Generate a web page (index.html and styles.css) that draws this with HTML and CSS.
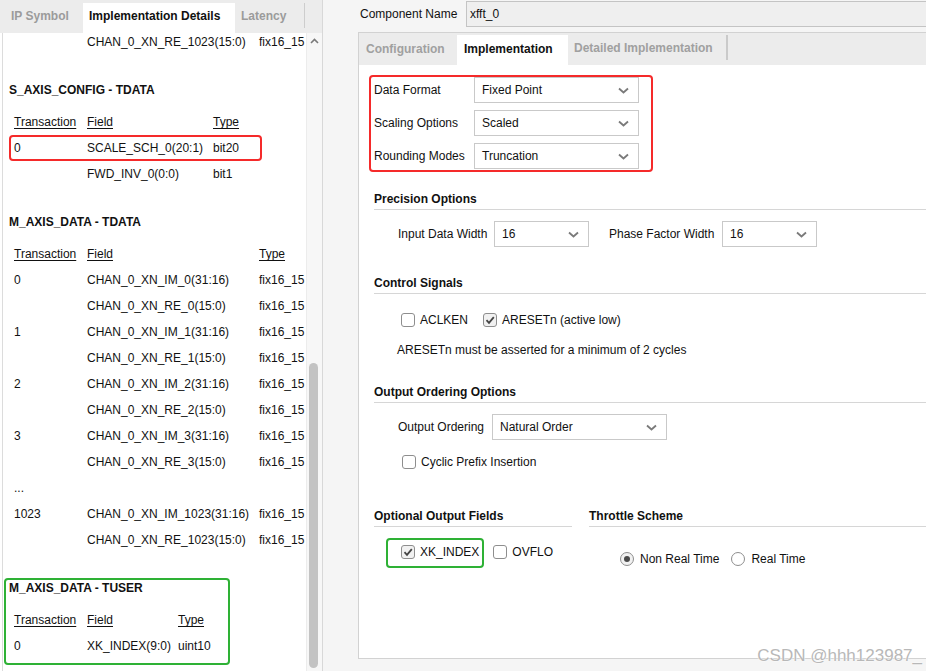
FILE: index.html
```html
<!DOCTYPE html>
<html>
<head>
<meta charset="utf-8">
<link rel="stylesheet" href="styles.css">
</head>
<body>
<div class="app">
  <div class="left">
    <div class="ltabs">
      <div class="ltab lt1">IP Symbol</div>
      <div class="ltab lt2 active">Implementation Details</div>
      <div class="ltab lt3">Latency</div>
    </div>
    <div class="lbody">
      <div class="lcontent">
        <div class="scrolled">
          <div class="grid g-data">
            <span></span><span>CHAN_0_XN_RE_1023(15:0)</span><span>fix16_15</span>
          </div>

          <section class="sec">
            <div class="sec-title">S_AXIS_CONFIG - TDATA</div>
            <div class="grid g-config">
              <span class="hd">Transaction</span><span class="hd">Field</span><span class="hd">Type</span>
              <span>0</span><span>SCALE_SCH_0(20:1)</span><span>bit20</span>
              <span></span><span>FWD_INV_0(0:0)</span><span>bit1</span>
            </div>
            <div class="annot red-left"></div>
          </section>

          <section class="sec">
            <div class="sec-title">M_AXIS_DATA - TDATA</div>
            <div class="grid g-data">
              <span class="hd">Transaction</span><span class="hd">Field</span><span class="hd">Type</span>
              <span>0</span><span>CHAN_0_XN_IM_0(31:16)</span><span>fix16_15</span>
              <span></span><span>CHAN_0_XN_RE_0(15:0)</span><span>fix16_15</span>
              <span>1</span><span>CHAN_0_XN_IM_1(31:16)</span><span>fix16_15</span>
              <span></span><span>CHAN_0_XN_RE_1(15:0)</span><span>fix16_15</span>
              <span>2</span><span>CHAN_0_XN_IM_2(31:16)</span><span>fix16_15</span>
              <span></span><span>CHAN_0_XN_RE_2(15:0)</span><span>fix16_15</span>
              <span>3</span><span>CHAN_0_XN_IM_3(31:16)</span><span>fix16_15</span>
              <span></span><span>CHAN_0_XN_RE_3(15:0)</span><span>fix16_15</span>
              <span>...</span><span></span><span></span>
              <span>1023</span><span>CHAN_0_XN_IM_1023(31:16)</span><span>fix16_15</span>
              <span></span><span>CHAN_0_XN_RE_1023(15:0)</span><span>fix16_15</span>
            </div>
          </section>

          <section class="sec">
            <div class="sec-title">M_AXIS_DATA - TUSER</div>
            <div class="grid g-user">
              <span class="hd">Transaction</span><span class="hd">Field</span><span class="hd">Type</span>
              <span>0</span><span>XK_INDEX(9:0)</span><span>uint10</span>
            </div>
            <div class="annot green-left"></div>
          </section>
        </div>
      </div>
      <div class="scrollbar">
        <svg class="uparrow" width="9" height="6" viewBox="0 0 9 6"><path d="M1 5 L4.5 1.5 L8 5" fill="none" stroke="#7a7a7a" stroke-width="1.6"/></svg>
        <div class="thumb"></div>
      </div>
    </div>
  </div>

  <div class="right">
    <div class="comp-row">
      <span class="comp-label">Component Name</span>
      <div class="comp-input">xfft_0</div>
    </div>
    <div class="tabpanel">
      <div class="rtabs">
        <div class="rtab rt1">Configuration</div>
        <div class="rtab rt2 active">Implementation</div>
        <div class="rtab rt3">Detailed Implementation</div>
      </div>
      <div class="rcontent">
        <div class="fmt-group">
          <div class="frow">
            <span class="flabel">Data Format</span>
            <div class="select s-fmt"><span>Fixed Point</span><svg width="11" height="7" viewBox="0 0 11 7"><path d="M1 1.5 L5.5 5.5 L10 1.5" fill="none" stroke="#7a7a7a" stroke-width="1.8"/></svg></div>
          </div>
          <div class="frow">
            <span class="flabel">Scaling Options</span>
            <div class="select s-fmt"><span>Scaled</span><svg width="11" height="7" viewBox="0 0 11 7"><path d="M1 1.5 L5.5 5.5 L10 1.5" fill="none" stroke="#7a7a7a" stroke-width="1.8"/></svg></div>
          </div>
          <div class="frow">
            <span class="flabel">Rounding Modes</span>
            <div class="select s-fmt"><span>Truncation</span><svg width="11" height="7" viewBox="0 0 11 7"><path d="M1 1.5 L5.5 5.5 L10 1.5" fill="none" stroke="#7a7a7a" stroke-width="1.8"/></svg></div>
          </div>
          <div class="annot red-right"></div>
        </div>

        <div class="gtitle t-prec">Precision Options</div>
        <div class="prow">
          <span class="plabel pl-in">Input Data Width</span>
          <div class="select s-small"><span>16</span><svg width="11" height="7" viewBox="0 0 11 7"><path d="M1 1.5 L5.5 5.5 L10 1.5" fill="none" stroke="#7a7a7a" stroke-width="1.8"/></svg></div>
          <span class="plabel pl-ph">Phase Factor Width</span>
          <div class="select s-small"><span>16</span><svg width="11" height="7" viewBox="0 0 11 7"><path d="M1 1.5 L5.5 5.5 L10 1.5" fill="none" stroke="#7a7a7a" stroke-width="1.8"/></svg></div>
        </div>

        <div class="gtitle t-ctrl">Control Signals</div>
        <div class="crow c-ctrl">
          <span class="cb"></span><span class="cl cl-aclk">ACLKEN</span>
          <span class="cb checked"><svg width="12" height="12" viewBox="0 0 12 12"><path d="M2.5 6.2 L5 8.8 L9.8 3.2" fill="none" stroke="#444" stroke-width="1.8"/></svg></span><span class="cl">ARESETn (active low)</span>
        </div>
        <div class="note">ARESETn must be asserted for a minimum of 2 cycles</div>

        <div class="gtitle t-out">Output Ordering Options</div>
        <div class="prow">
          <span class="plabel pl-oo">Output Ordering</span>
          <div class="select s-order"><span>Natural Order</span><svg width="11" height="7" viewBox="0 0 11 7"><path d="M1 1.5 L5.5 5.5 L10 1.5" fill="none" stroke="#7a7a7a" stroke-width="1.8"/></svg></div>
        </div>
        <div class="crow c-cyc">
          <span class="cb"></span><span class="cl">Cyclic Prefix Insertion</span>
        </div>

        <div class="cols">
          <div class="col-opt">
            <div class="gtitle">Optional Output Fields</div>
            <div class="crow c-opt">
              <span class="cb checked"><svg width="12" height="12" viewBox="0 0 12 12"><path d="M2.5 6.2 L5 8.8 L9.8 3.2" fill="none" stroke="#444" stroke-width="1.8"/></svg></span><span class="cl cl-xk">XK_INDEX</span>
              <span class="cb"></span><span class="cl">OVFLO</span>
              <div class="annot green-right"></div>
            </div>
          </div>
          <div class="col-thr">
            <div class="gtitle">Throttle Scheme</div>
            <div class="crow c-thr">
              <span class="radio on"></span><span class="cl cl-nrt">Non Real Time</span>
              <span class="radio"></span><span class="cl">Real Time</span>
            </div>
          </div>
        </div>
      </div>
    </div>
  </div>
  <div class="watermark">CSDN @hhh123987_</div>
</div>
</body>
</html>
```

FILE: styles.css
```css
html, body {
  margin: 0;
  padding: 0;
}
body {
  font-family: "Liberation Sans", Arial, sans-serif;
  font-size: 12px;
  color: #111;
  overflow: hidden;
}
.app {
  position: relative;
  display: flex;
  width: 926px;
  height: 671px;
  overflow: hidden;
  background: #f2f2f2;
}

/* ---------- left panel ---------- */
.left {
  width: 323px;
  height: 671px;
  flex: none;
  display: flex;
  flex-direction: column;
  background: #fff;
  border-right: 1px solid #d8d8d8;
  box-sizing: border-box;
}
.ltabs {
  height: 33px;
  flex: none;
  display: flex;
  align-items: flex-end;
  padding-left: 3px;
  background: #ececec;
}
.ltab {
  height: 30px;
  line-height: 26px;
  padding-bottom: 4px;
  box-sizing: border-box;
  font-weight: bold;
  color: #9b9b9b;
  white-space: nowrap;
}
.lt1 { width: 80px; padding-left: 8px; }
.lt2 { width: 152px; padding-left: 6px; background: #fff; color: #111; }
.lt3 {
  width: 70px;
  padding-left: 6px;
  border-right: 1px solid #cdcdcd;
  height: 25px;
  margin-bottom: 5px;
  line-height: 26px;
  padding-bottom: 0;
}
.lbody {
  flex: 1;
  min-height: 0;
  display: flex;
  margin-left: 2px;
  border-left: 1px solid #dcdcdc;
}
.lcontent {
  width: 303px;
  flex: none;
  overflow: hidden;
  background: #fff;
}
.scrolled {
  margin-top: -4px;
}
.grid {
  display: grid;
  grid-auto-rows: 26px;
  align-items: center;
  padding-left: 11px;
  white-space: nowrap;
}
.g-data { grid-template-columns: 73px 172px auto; }
.g-config { grid-template-columns: 73px 126px auto; }
.g-user { grid-template-columns: 73px 91px auto; }
.hd {
  text-decoration: underline;
  text-underline-offset: 2px;
}
.sec {
  position: relative;
  margin-top: 27px;
}
.sec-title {
  margin-left: 6px;
  line-height: 16px;
  font-weight: bold;
  margin-bottom: 11px;
}
.annot {
  position: absolute;
  box-sizing: border-box;
  border-radius: 4px;
  pointer-events: none;
}
.red-left {
  top: 53px;
  left: 6px;
  width: 253px;
  height: 26px;
  border: 2px solid #f52a2a;
}
.green-left {
  top: -2px;
  left: 1px;
  width: 226px;
  height: 87px;
  border: 2px solid #2eb135;
}
.scrollbar {
  width: 16px;
  flex: none;
  background: #f7f7f7;
  border-left: 1px solid #ececec;
  box-sizing: border-box;
  display: flex;
  flex-direction: column;
}
.uparrow {
  margin: 5px 0 0 3px;
  flex: none;
}
.thumb {
  margin: 319px 0 0 2px;
  width: 9px;
  height: 305px;
  border-radius: 5px;
  background: #c3c3c3;
  flex: none;
}

/* ---------- right panel ---------- */
.right {
  flex: 1;
  display: flex;
  flex-direction: column;
  padding-left: 35px;
  padding-top: 1px;
  background: #f5f5f5;
  min-width: 0;
}
.comp-row {
  display: flex;
  align-items: center;
  height: 26px;
}
.comp-label {
  width: 108px;
  padding-left: 2px;
  box-sizing: border-box;
  flex: none;
}
.comp-input {
  flex: 1;
  height: 26px;
  line-height: 24px;
  box-sizing: border-box;
  border: 1px solid #c4c4c4;
  border-right: none;
  background: #efefef;
  padding-left: 3px;
}
.tabpanel {
  margin-top: 5px;
  height: 627px;
  box-sizing: border-box;
  border-left: 1px solid #d2d2d2;
  border-top: 1px solid #d2d2d2;
  border-bottom: 1px solid #d2d2d2;
  display: flex;
  flex-direction: column;
  background: #fff;
}
.rtabs {
  height: 32px;
  flex: none;
  display: flex;
  background: #ececec;
}
.rtab {
  font-weight: bold;
  color: #a0a0a0;
  white-space: nowrap;
  box-sizing: border-box;
}
.rt1 { width: 98px; padding-left: 7px; line-height: 32px; }
.rt2 { width: 111px; padding-left: 7px; margin-top: 2px; height: 30px; line-height: 28px; background: #fff; color: #111; }
.rt3 { width: 160px; padding-left: 6px; margin-top: 2px; height: 25px; line-height: 27px; border-right: 2px solid #cacaca; }
.rcontent {
  flex: 1;
  padding-left: 15px;
  background: #fff;
}
.fmt-group {
  position: relative;
  margin-top: 10px;
  padding-top: 2px;
  display: flex;
  flex-direction: column;
  gap: 7px;
}
.frow {
  display: flex;
  align-items: center;
  height: 26px;
}
.flabel {
  width: 100px;
  flex: none;
}
.select {
  display: flex;
  align-items: center;
  justify-content: space-between;
  height: 26px;
  box-sizing: border-box;
  border: 1px solid #c9c9c9;
  background: #fff;
  padding: 0 9px 0 7px;
  flex: none;
}
.s-fmt { width: 165px; }
.s-small { width: 95px; }
.s-order { width: 175px; }
.red-right {
  top: 0;
  left: -5px;
  width: 284px;
  height: 97px;
  border: 2px solid #f52a2a;
}
.gtitle {
  font-weight: bold;
  line-height: 16px;
  padding-bottom: 2px;
  border-bottom: 1px solid #d6d6d6;
  white-space: nowrap;
}
.t-prec { margin-top: 22px; }
.t-ctrl { margin-top: 28px; }
.t-out { margin-top: 26px; }
.prow {
  display: flex;
  align-items: center;
  margin-top: 11px;
  padding-left: 24px;
  height: 26px;
}
.plabel { flex: none; white-space: nowrap; }
.pl-in { width: 96px; }
.pl-ph { width: 113px; margin-left: 20px; }
.pl-oo { width: 94px; }
.crow {
  display: flex;
  align-items: center;
  height: 16px;
  white-space: nowrap;
}
.cb {
  width: 14px;
  height: 14px;
  box-sizing: border-box;
  border: 1px solid #8e8e8e;
  border-radius: 3px;
  background: #fff;
  flex: none;
  display: flex;
  align-items: center;
  justify-content: center;
}
.cb.checked { background: #f1f1f1; }
.cl { margin-left: 5px; }
.c-ctrl { margin-top: 18px; padding-left: 27px; }
.cl-aclk { margin-right: 15px; }
.note {
  margin-top: 14px;
  padding-left: 23px;
  line-height: 16px;
}
.c-cyc { margin-top: 14px; padding-left: 28px; }
.cols {
  display: flex;
  margin-top: 38px;
}
.col-opt { width: 198px; flex: none; }
.col-thr { flex: 1; margin-left: 17px; }
.c-opt {
  position: relative;
  margin-top: 17px;
  padding-left: 27px;
}
.cl-xk { margin-right: 14px; }
.green-right {
  top: -6px;
  left: 12px;
  width: 98px;
  height: 30px;
  border: 2px solid #2eb135;
}
.c-thr { margin-top: 24px; padding-left: 31px; }
.radio {
  width: 14px;
  height: 14px;
  box-sizing: border-box;
  border: 1px solid #8e8e8e;
  border-radius: 50%;
  background: #fff;
  flex: none;
  display: flex;
  align-items: center;
  justify-content: center;
}
.radio.on { background: #f1f1f1; }
.radio.on::after {
  content: "";
  width: 6px;
  height: 6px;
  border-radius: 50%;
  background: #4a4a4a;
}
.c-thr .cl { margin-left: 6px; }
.cl-nrt { margin-right: 12px; }
.watermark {
  position: absolute;
  right: 4px;
  bottom: 5px;
  font-size: 17px;
  line-height: 20px;
  color: #b8b8b8;
  text-shadow: 0 0 2px #fff, 0 0 1px #fff;
  white-space: nowrap;
}
```
